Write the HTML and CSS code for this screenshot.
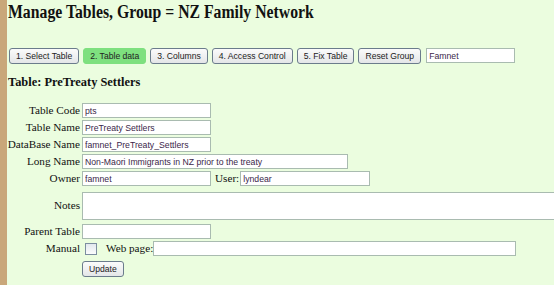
FILE: index.html
```html
<!DOCTYPE html>
<html>
<head>
<meta charset="utf-8">
<title>Manage Tables</title>
<link rel="stylesheet" href="styles.css">
</head>
<body>
<div class="page">
  <h1 class="title">Manage Tables, Group = NZ Family Network</h1>
  <div class="toolbar">
    <button class="btn">1. Select Table</button>
    <button class="btn btn-active">2. Table data</button>
    <button class="btn">3. Columns</button>
    <button class="btn">4. Access Control</button>
    <button class="btn">5. Fix Table</button>
    <button class="btn">Reset Group</button>
    <input class="field field-group" type="text" value="Famnet">
  </div>
  <h2 class="subtitle">Table: PreTreaty Settlers</h2>
  <form class="form">
    <label class="lbl">Table Code</label>
    <div class="cell"><input class="field field-m" type="text" value="pts"></div>
    <label class="lbl">Table Name</label>
    <div class="cell"><input class="field field-m" type="text" value="PreTreaty Settlers"></div>
    <label class="lbl">DataBase Name</label>
    <div class="cell"><input class="field field-m" type="text" value="famnet_PreTreaty_Settlers"></div>
    <label class="lbl">Long Name</label>
    <div class="cell"><input class="field field-l" type="text" value="Non-Maori Immigrants in NZ prior to the treaty"></div>
    <label class="lbl">Owner</label>
    <div class="cell"><input class="field field-m" type="text" value="famnet"><span class="inl user">User:</span><input class="field field-user" type="text" value="lyndear"></div>
    <label class="lbl">Notes</label>
    <div class="cell"><textarea class="notes"></textarea></div>
    <label class="lbl">Parent Table</label>
    <div class="cell"><input class="field field-m" type="text" value=""></div>
    <label class="lbl">Manual</label>
    <div class="cell"><span class="chk"></span><span class="inl web">Web page:</span><input class="field field-web" type="text" value=""></div>
    <span></span>
    <div class="cell"><button type="button" class="btn btn-update">Update</button></div>
  </form>
</div>
</body>
</html>
```

FILE: styles.css
```css
html, body {
  margin: 0;
  padding: 0;
  overflow: hidden;
}
body {
  background: #ebfddf;
  border-left: 7px solid #c9a77a;
  min-height: 285px;
  box-sizing: border-box;
  font-family: "Liberation Serif", "Times New Roman", serif;
  color: #111;
}
.page {
  padding-left: 1px;
  width: 547px;
}
.title {
  font-family: "Liberation Serif", "Times New Roman", serif;
  font-size: 18px;
  font-weight: bold;
  margin: 0;
  padding-top: 2px;
  line-height: 20px;
  white-space: nowrap;
  transform: scaleX(0.875);
  transform-origin: left top;
}
.toolbar {
  display: flex;
  align-items: center;
  margin-top: 25px;
  margin-left: 1px;
  height: 17px;
}
.btn {
  font-family: "Liberation Sans", Arial, sans-serif;
  font-size: 8.6px;
  color: #222;
  height: 16px;
  padding: 0 6px;
  border: 1px solid #6b7c8c;
  border-radius: 3px;
  background: linear-gradient(#fbfbfb, #e4e6e8);
  margin: 0 4px 0 0;
  line-height: 14px;
  flex-shrink: 0;
}
.btn-active {
  background: #7ee07f;
  border-color: #7ee07f;
}
.field {
  font-family: "Liberation Sans", Arial, sans-serif;
  font-size: 8.7px;
  color: #3b1f4a;
  height: 15px;
  box-sizing: border-box;
  border: 1px solid #a9bbb0;
  background: #fff;
  padding: 0 2px;
  margin: 0;
  flex-shrink: 0;
}
.field-group {
  width: 89px;
  margin-left: 1px;
}
.subtitle {
  font-family: "Liberation Serif", "Times New Roman", serif;
  font-size: 12.4px;
  font-weight: bold;
  margin: 11px 0 0 0;
  line-height: 15px;
}
.form {
  display: grid;
  grid-template-columns: 73px 470px;
  column-gap: 2px;
  row-gap: 2px;
  margin-top: 13px;
  margin-left: -1px;
  align-items: center;
}
.lbl {
  font-size: 11.2px;
  text-align: right;
  white-space: nowrap;
  line-height: 15px;
}
.cell {
  display: flex;
  align-items: center;
  min-height: 15px;
}
.field-m { width: 129px; }
.field-l { width: 266px; }
.field-user { width: 130px; }
.field-web { width: 363px; }
.inl {
  font-size: 11.2px;
  line-height: 15px;
  flex-shrink: 0;
}
.user { margin: 0 1px 0 4px; }
.notes {
  width: 480px;
  height: 28px;
  box-sizing: border-box;
  border: 1px solid #a9bbb0;
  background: #fff;
  margin: 4px 0 2px 0;
  resize: none;
  display: block;
  flex-shrink: 0;
}
.chk {
  display: inline-block;
  width: 10px;
  height: 10px;
  border: 1px solid #7c8ea0;
  background: linear-gradient(#e2e8ee, #fbfcfd);
  margin: 0 9px 0 3px;
  flex-shrink: 0;
}
.web { margin-right: 0; }
.btn-update {
  margin-top: 3px;
  height: 16px;
}
```
